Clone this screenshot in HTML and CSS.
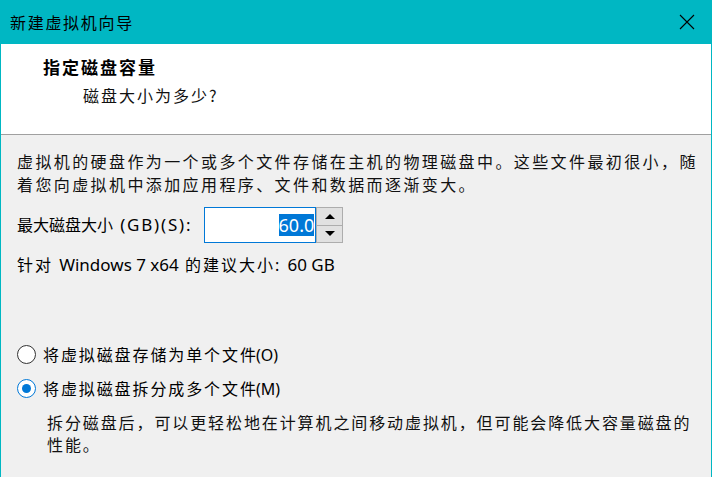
FILE: index.html
```html
<!DOCTYPE html>
<html lang="zh-CN">
  <head>
    <meta charset="UTF-8" />
    <meta name="viewport" content="width=device-width, initial-scale=1.0" />
    <title>新建虚拟机向导</title>
    <link rel="stylesheet" href="styles.css">
  </head>
  <body>
    <div class="window">
      <div class="titlebar">
        <span class="title">新建虚拟机向导</span>
        <button class="close" aria-label="关闭">
          <svg width="16" height="16" viewBox="0 0 16 16">
            <path d="M1 1 L15 15 M15 1 L1 15" stroke="#000" stroke-width="1.1" fill="none" />
          </svg>
        </button>
      </div>

      <header class="head">
        <h1>指定磁盘容量</h1>
        <p>磁盘大小为多少?</p>
      </header>

      <main class="content">
        <p class="intro">
          虚拟机的硬盘作为一个或多个文件存储在主机的物理磁盘中。这些文件最初很小，随<br />着您向虚拟机中添加应用程序、文件和数据而逐渐变大。
        </p>

        <div class="size-row">
          <label for="size">最大磁盘大小 <span class="latin">(GB)(S):</span></label>
          <div class="spin">
            <div class="spin-field" id="size"><span class="selected">60.0</span></div>
            <div class="spin-btns">
              <button class="is-up" aria-label="增加"></button>
              <button class="is-down" aria-label="减少"></button>
            </div>
          </div>
        </div>

        <p class="recommend">针对 <span class="latin">Windows 7 x64</span> 的建议大小: <span class="latin">60 GB</span></p>

        <div class="options">
          <label class="radio">
            <span class="dot"></span>
            <span>将虚拟磁盘存储为单个文<span class="last">件</span><span class="latin">(O)</span></span>
          </label>
          <label class="radio is-checked">
            <span class="dot"></span>
            <span>将虚拟磁盘拆分成多个文<span class="last">件</span><span class="latin">(M)</span></span>
          </label>
          <p class="note">
            拆分磁盘后，可以更轻松地在计算机之间移动虚拟机，但可能会降低大容量磁盘的<br />性能。
          </p>
        </div>
      </main>
    </div>
  </body>
</html>
```

FILE: styles.css
```css
*,
*::before,
*::after {
  box-sizing: border-box;
  margin: 0;
  padding: 0;
}

body {
  font-family: 'Noto Sans', 'Noto Sans CJK SC', sans-serif;
  background: #f0f0f0;
  color: #000;
  overflow: hidden;
}

.window {
  width: 712px;
  height: 477px;
  display: flex;
  flex-direction: column;
  border-left: 1px solid #00b7c3;
  border-right: 1px solid #00b7c3;
  background: #f0f0f0;
}

.titlebar {
  height: 44px;
  flex-shrink: 0;
  display: flex;
  align-items: center;
  justify-content: space-between;
  background: #00b7c3;
  padding-left: 10px;
  margin: 0 -1px;

  & .title {
    font-family: 'Noto Sans CJK SC', sans-serif;
    font-size: 16px;
    letter-spacing: 1.7px;
    line-height: 22px;
  }

  & .close {
    width: 46px;
    height: 44px;
    border: 0;
    background: transparent;
    display: grid;
    place-content: center;
    padding-right: 4px;
  }
}

.head {
  height: 91px;
  flex-shrink: 0;
  background: #fff;
  border-bottom: 1px solid #a0a0a0;
  padding: 11px 0 0 42px;

  & h1 {
    font-family: 'Noto Sans CJK SC', sans-serif;
    font-size: 17px;
    font-weight: bold;
    letter-spacing: 2px;
    line-height: 24px;
  }

  & p {
    font-family: 'Noto Sans CJK SC', sans-serif;
    font-size: 16px;
    letter-spacing: 2px;
    line-height: 22px;
    margin: 5px 0 0 40px;
    color: #111;
  }
}

.content {
  padding: 16px 4px 0 16px;
  font-size: 16px;
}

.intro {
  letter-spacing: 2.4px;
  line-height: 23px;
  color: #111;
}

.latin {
  font-family: 'Noto Sans', sans-serif;
  letter-spacing: 0;
}

.size-row {
  display: flex;
  align-items: center;
  gap: 12px;
  margin-top: 10px;
  height: 36px;

  & label {
    line-height: 22px;
  }

  & .latin {
    font-size: 17px;
    letter-spacing: 1.8px;
    margin-left: 3px;
  }
}

.spin {
  display: flex;
  height: 36px;
}

.spin-field {
  width: 112px;
  height: 36px;
  background: #fff;
  border: 1px solid #0078d7;
  display: flex;
  align-items: center;
  justify-content: flex-end;
  padding-right: 1px;

  & .selected {
    background: #0078d7;
    color: #fff;
    font-size: 18px;
    line-height: 22px;
  }
}

.spin-btns {
  display: flex;
  flex-direction: column;
  width: 27px;

  & button {
    flex: 1;
    border: 1px solid #adadad;
    background: #e1e1e1;
    display: grid;
    place-content: center;

    &::before {
      content: '';
      border-left: 5px solid transparent;
      border-right: 5px solid transparent;
    }

    &.is-up::before {
      border-bottom: 5px solid #000;
    }

    &.is-down {
      border-top: 0;

      &::before {
        border-top: 5px solid #000;
      }
    }
  }
}

.recommend {
  margin-top: 11px;
  line-height: 22px;
  letter-spacing: 2px;

  & .latin {
    font-size: 17px;
  }
}

.options {
  margin-top: 65px;
  display: flex;
  flex-direction: column;
  gap: 8px;
}

.radio {
  display: flex;
  align-items: center;
  gap: 7px;
  height: 26px;
  letter-spacing: 1.9px;

  & .last {
    letter-spacing: 0;
  }

  & .dot {
    width: 19px;
    height: 19px;
    border-radius: 50%;
    border: 1.5px solid #333;
    background: #fff;
    display: grid;
    place-content: center;
  }

  &.is-checked .dot {
    border-color: #0078d7;

    &::after {
      content: '';
      width: 9px;
      height: 9px;
      border-radius: 50%;
      background: #0078d7;
    }
  }
}

.note {
  margin: 3px 0 0 30px;
  line-height: 22px;
  letter-spacing: 1.9px;
  color: #111;
}
```
